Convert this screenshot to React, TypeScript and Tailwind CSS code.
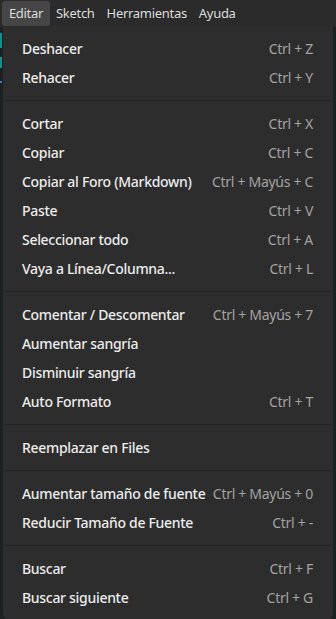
import React from 'react';

type Item = { label: string; shortcut?: string };

const groups: Item[][] = [
  [
    { label: 'Deshacer', shortcut: 'Ctrl + Z' },
    { label: 'Rehacer', shortcut: 'Ctrl + Y' },
  ],
  [
    { label: 'Cortar', shortcut: 'Ctrl + X' },
    { label: 'Copiar', shortcut: 'Ctrl + C' },
    { label: 'Copiar al Foro (Markdown)', shortcut: 'Ctrl + Mayús + C' },
    { label: 'Paste', shortcut: 'Ctrl + V' },
    { label: 'Seleccionar todo', shortcut: 'Ctrl + A' },
    { label: 'Vaya a Línea/Columna...', shortcut: 'Ctrl + L' },
  ],
  [
    { label: 'Comentar / Descomentar', shortcut: 'Ctrl + Mayús + 7' },
    { label: 'Aumentar sangría' },
    { label: 'Disminuir sangría' },
    { label: 'Auto Formato', shortcut: 'Ctrl + T' },
  ],
  [{ label: 'Reemplazar en Files' }],
  [
    { label: 'Aumentar tamaño de fuente', shortcut: 'Ctrl + Mayús + 0' },
    { label: 'Reducir Tamaño de Fuente', shortcut: 'Ctrl + -' },
  ],
  [
    { label: 'Buscar', shortcut: 'Ctrl + F' },
    { label: 'Buscar siguiente', shortcut: 'Ctrl + G' },
  ],
];

const MenuRow = ({ label, shortcut }: Item) => (
  <div className="flex h-[29px] items-center justify-between pl-[19px] pr-[20px]">
    <span className="text-[14px] font-medium tracking-[-0.3px] text-[#ececec]">{label}</span>
    {shortcut && <span className="text-[14px] tracking-[-0.3px] text-[#a3a3a3]">{shortcut}</span>}
  </div>
);

export default function App() {
  return (
    <div
      className="relative h-[619px] w-[336px] overflow-hidden bg-[#1b2023]"
      style={{ fontFamily: '"Noto Sans", "Open Sans", sans-serif' }}
    >
      {/* menu bar */}
      <div className="flex h-[27px] items-center bg-[#2b2b2b] pl-[2px] text-[13px] tracking-[-0.3px] text-[#dcdcdc]">
        <span className="w-[48px] rounded-[3px] bg-[#464646] py-[3px] text-center">Editar</span>
        <span className="px-[6px]">Sketch</span>
        <span className="px-[6px]">Herramientas</span>
        <span className="px-[6px]">Ayuda</span>
      </div>

      {/* editor bits peeking on the left edge */}
      <div className="absolute left-0 top-[33px] h-[15px] w-[2px] bg-[#0f8f8f]" />
      <div className="absolute left-0 top-[57px] h-[11px] w-[2px] bg-[#0f8f8f]" />
      <div className="absolute left-0 top-[81px] h-[2px] w-[2px] bg-[#3a7fc0]" />

      {/* dropdown */}
      <div className="ml-[3px] w-[330px] rounded-b-[6px] bg-[#2d2d2d] pt-[7px] pb-[8px]">
        {groups.map((g, gi) => (
          <div key={gi}>
            {gi > 0 && (
              <div className="flex h-[17px] items-center">
                <div className="h-[1px] w-full bg-[#242424]" />
              </div>
            )}
            {g.map((it) => (
              <MenuRow key={it.label} {...it} />
            ))}
          </div>
        ))}
      </div>
    </div>
  );
}
